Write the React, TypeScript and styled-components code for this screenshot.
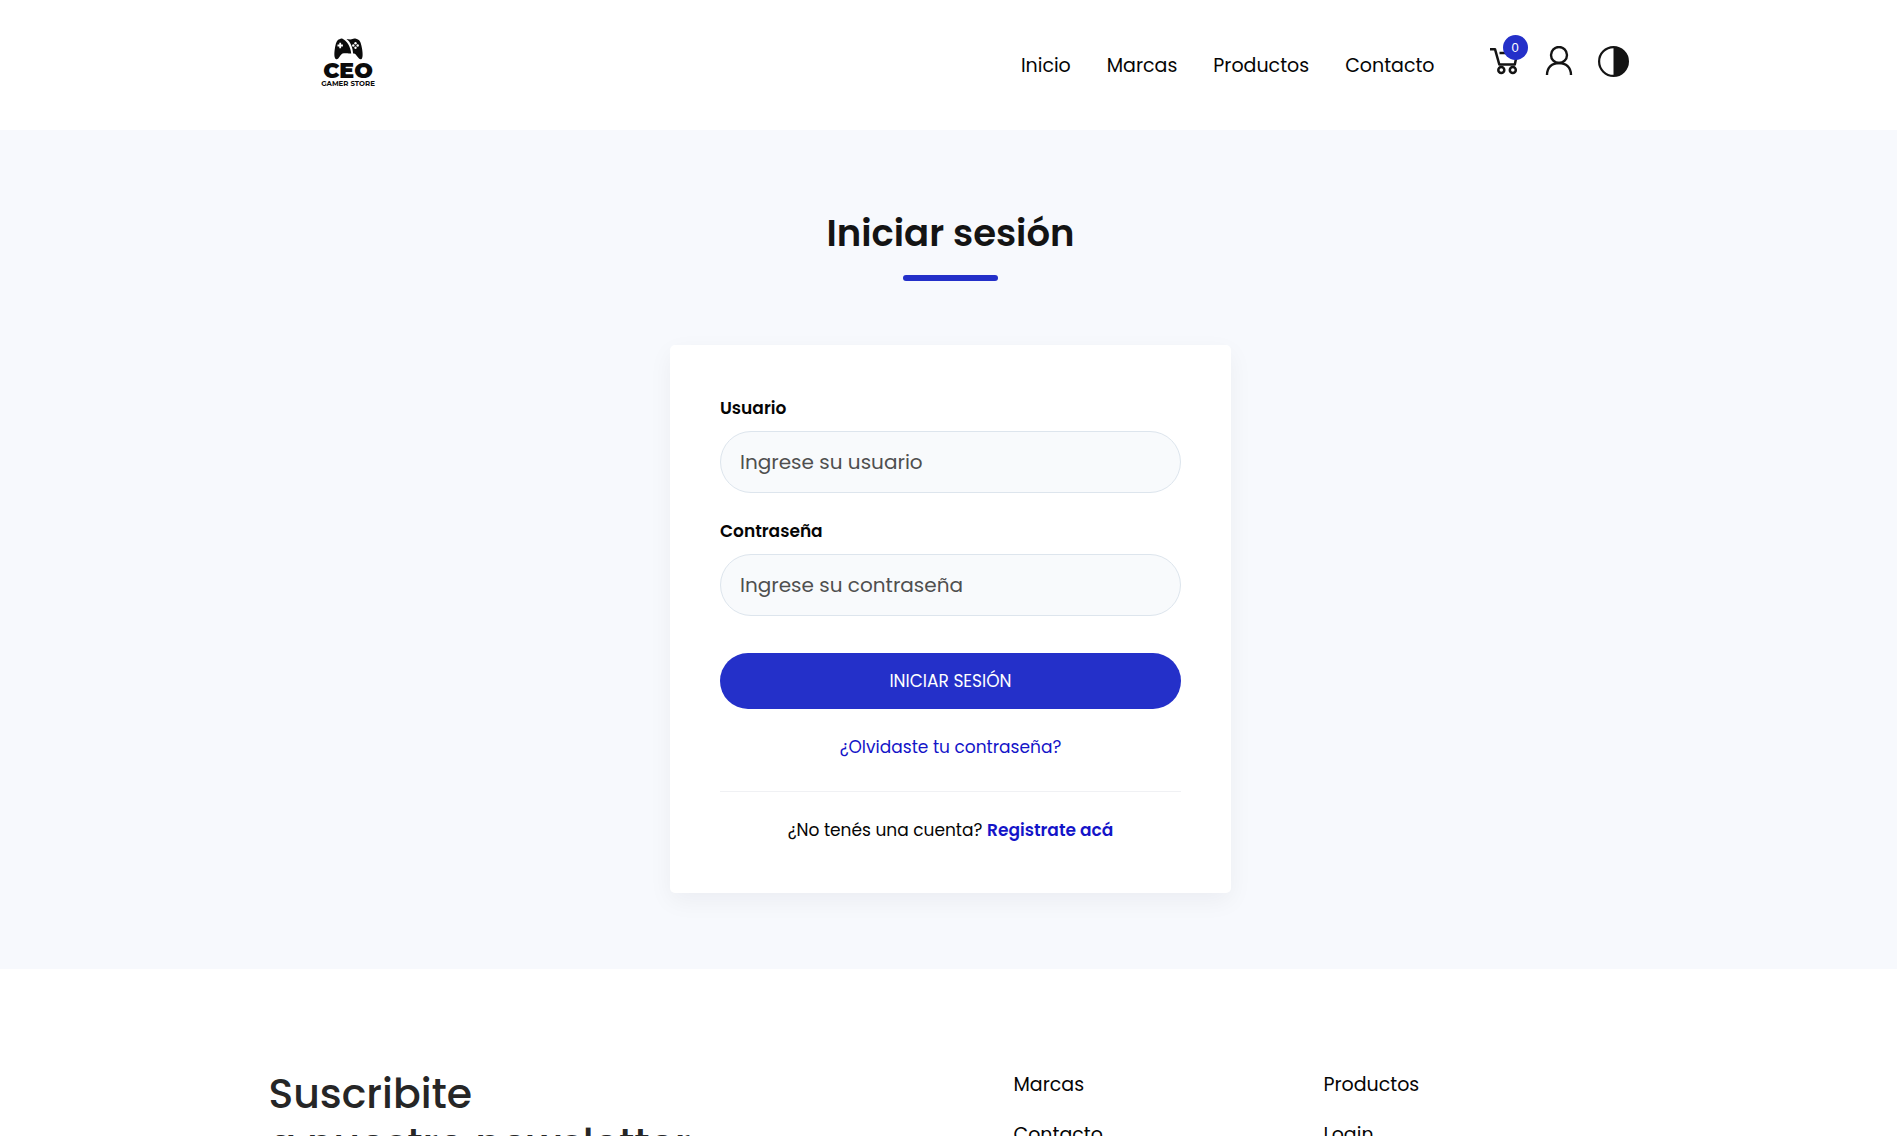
import React from "react";
import styled, { createGlobalStyle } from "styled-components";

const color = {
  ink: "#141414",
  text: "#050505",
  muted: "#4f4f4f",
  brand: "#2430c9",
  link: "#1414c8",
  surface: "#ffffff",
  page: "#f7f9fd",
  field: "#f8fafc",
  border: "#dde5ed",
};

const GlobalStyle = createGlobalStyle`
  *, *::before, *::after { box-sizing: border-box; }
  body {
    margin: 0;
    background: ${color.surface};
    color: ${color.text};
    font-family: Poppins, Inter, "Open Sans", sans-serif;
    font-size: 17px;
    overflow: hidden;
  }
  a { color: inherit; text-decoration: none; }
`;

const Page = styled.div`
  height: 100vh;
  overflow: hidden;
`;

const Header = styled.header`
  display: flex;
  justify-content: center;
  height: 130px;
  padding: 0 24px;
  background: ${color.surface};
`;

const HeaderInner = styled.div`
  display: flex;
  justify-content: space-between;
  align-items: center;
  width: 100%;
  max-width: 1310px;
  margin-left: 50px;
`;

const LogoLink = styled.a`
  display: block;
  padding-bottom: 4px;
  line-height: 0;
`;

const HeaderRight = styled.div`
  display: flex;
  align-items: center;
  gap: 55px;
`;

const Nav = styled.nav`
  display: flex;
  gap: 36px;
  padding-top: 2px;
`;

const NavLink = styled.a`
  font-size: 19px;
  line-height: 28px;
`;

const Actions = styled.div`
  display: flex;
  align-items: center;
  gap: 25px;
  padding-bottom: 8px;
`;

const IconButton = styled.button`
  position: relative;
  display: block;
  padding: 0;
  border: 0;
  background: none;
  color: ${color.ink};
  line-height: 0;
  cursor: pointer;
`;

const Badge = styled.span`
  position: absolute;
  top: -11px;
  right: -8px;
  width: 25px;
  height: 25px;
  border-radius: 50%;
  background: ${color.brand};
  color: #fff;
  font-size: 13px;
  line-height: 25px;
  text-align: center;
`;

const Main = styled.main`
  display: flex;
  flex-direction: column;
  align-items: center;
  padding: 78px 20px 76px 24px;
  background: ${color.page};
`;

const Title = styled.h1`
  margin: 0;
  color: ${color.ink};
  font-size: 37px;
  font-weight: 600;
  line-height: 50px;
`;

const TitleBar = styled.span`
  width: 95px;
  height: 6px;
  margin: 17px 0 64px;
  border-radius: 3px;
  background: ${color.brand};
`;

const Card = styled.form`
  display: flex;
  flex-direction: column;
  width: 100%;
  max-width: 561px;
  padding: 50px 50px 49px;
  border-radius: 5px;
  background: ${color.surface};
  box-shadow: 0 8px 24px rgba(20, 20, 40, 0.05);
`;

const Field = styled.div`
  display: flex;
  flex-direction: column;
  gap: 10px;
  margin-bottom: 25px;
`;

const Label = styled.label`
  font-weight: 600;
  line-height: 26px;
`;

const Input = styled.input`
  width: 100%;
  height: 62px;
  padding: 0 19px;
  border: 1px solid ${color.border};
  border-radius: 31px;
  background: ${color.field};
  color: ${color.text};
  font: inherit;
  font-size: 20px;
  &::placeholder { color: ${color.muted}; opacity: 1; }
`;

const Submit = styled.button`
  height: 56px;
  margin: 12px 0 24px;
  border: 0;
  border-radius: 28px;
  background: ${color.brand};
  color: #fff;
  font: inherit;
  text-transform: uppercase;
  cursor: pointer;
`;

const TextLink = styled.a<{ $strong?: boolean }>`
  color: ${color.link};
  font-weight: ${(p) => (p.$strong ? 600 : 400)};
`;

const CardText = styled.p`
  margin: 0;
  line-height: 28px;
  text-align: center;
`;

const Divider = styled.hr`
  width: 100%;
  margin: 30px 0 24px;
  border: 0;
  border-top: 1px solid #f0f1f4;
`;

const Footer = styled.footer`
  display: flex;
  justify-content: center;
  padding: 100px 20px 60px 24px;
`;

const FooterInner = styled.div`
  display: grid;
  grid-template-columns: 745px 310px 1fr;
  width: 100%;
  max-width: 1364px;
`;

const Newsletter = styled.h2`
  margin: 0;
  color: #262626;
  font-size: 41px;
  font-weight: 500;
  line-height: 50px;
`;

const FooterList = styled.ul`
  display: flex;
  flex-direction: column;
  gap: 22px;
  margin: 0;
  padding: 2px 0 0;
  list-style: none;
`;

function Logo() {
  return (
    <svg width="60" height="56" viewBox="0 0 60 56" role="img" aria-label="CEO Gamer Store">
      <path
        d="M20.500 4.200C17.800 4.600 16.700 8.400 15.800 14c-.6 4-.9 9.500 1.400 10.200 2.600.8 4.200-4.800 6.300-5.600.8-.3 4.200-.3 6.500-.1h2.200C31.500 11 28 6 23.500 3.700c-1-.6-2-.1-3 .5z"
        fill="#0b0b0b"
      />
      <path
        d="M27.500 3.900c4 2.900 6.200 8.300 6.600 14.600 1.500.1 2 .2 2.400.8 1.700 1.600 3.600 5.800 5.700 4.900 2-.9 1.500-6.600.9-10.300-.9-5.200-2-9.100-4.700-9.700-1-.2-1.500-.8-3-.8-1.700 0-2.200 1-4 1-1.500 0-2.700-.5-3.900-.5z"
        fill="#0b0b0b"
      />
      <path d="M18.500 10.500h5.400M21.200 7.800v5.400" stroke="#fff" strokeWidth="1.800" />
      <g fill="#fff">
        <circle cx="36.500" cy="8.300" r="1.200" />
        <circle cx="36.500" cy="12.700" r="1.200" />
        <circle cx="34.300" cy="10.500" r="1.200" />
        <circle cx="38.700" cy="10.500" r="1.200" />
      </g>
      <text
        x="29"
        y="43"
        textAnchor="middle"
        fontFamily="Montserrat, DejaVu Sans, sans-serif"
        fontWeight="900"
        fontSize="22"
        fill="#0b0b0b"
      >
        CEO
      </text>
      <text x="29" y="51" textAnchor="middle" fontFamily="Montserrat, Poppins, sans-serif" fontWeight="700" fontSize="7" fill="#0b0b0b">
        GAMER STORE
      </text>
    </svg>
  );
}

function CartIcon() {
  return (
    <svg width="30" height="30" viewBox="0 0 30 30" fill="none" stroke="currentColor" strokeWidth="2.500">
      <path d="M0 3.200h5L9.300 18.500h15.500L27 8M9.500 7H22" strokeLinejoin="round" />
      <circle cx="11.300" cy="24" r="3" />
      <circle cx="22.800" cy="24" r="3" />
    </svg>
  );
}

function UserIcon() {
  return (
    <svg width="28" height="30" viewBox="0 0 28 30" fill="none" stroke="currentColor" strokeWidth="2.400">
      <circle cx="14" cy="9" r="8" />
      <path d="M2 29C2 21.500 7 17 14 17s12 4.500 12 12" />
    </svg>
  );
}

function ContrastIcon() {
  return (
    <svg width="31" height="31" viewBox="0 0 31 31">
      <circle cx="15.500" cy="15.500" r="14.400" fill="none" stroke="currentColor" strokeWidth="2.200" />
      <path d="M15.500 1a14.500 14.500 0 0 1 0 29z" fill="currentColor" />
    </svg>
  );
}

const navItems = ["Inicio", "Marcas", "Productos", "Contacto"];
const footerColumns = [
  ["Marcas", "Contacto"],
  ["Productos", "Login"],
];

export default function App() {
  return (
    <Page>
      <GlobalStyle />
      <Header>
        <HeaderInner>
          <LogoLink href="#inicio">
            <Logo />
          </LogoLink>
          <HeaderRight>
            <Nav>
              {navItems.map((item) => (
                <NavLink key={item} href={`#${item.toLowerCase()}`}>
                  {item}
                </NavLink>
              ))}
            </Nav>
            <Actions>
              <IconButton type="button" aria-label="Carrito">
                <CartIcon />
                <Badge>0</Badge>
              </IconButton>
              <IconButton type="button" aria-label="Mi cuenta">
                <UserIcon />
              </IconButton>
              <IconButton type="button" aria-label="Cambiar tema">
                <ContrastIcon />
              </IconButton>
            </Actions>
          </HeaderRight>
        </HeaderInner>
      </Header>

      <Main>
        <Title>Iniciar sesión</Title>
        <TitleBar />
        <Card onSubmit={(e) => e.preventDefault()}>
          <Field>
            <Label htmlFor="usuario">Usuario</Label>
            <Input id="usuario" type="text" placeholder="Ingrese su usuario" />
          </Field>
          <Field>
            <Label htmlFor="contrasena">Contraseña</Label>
            <Input id="contrasena" type="password" placeholder="Ingrese su contraseña" />
          </Field>
          <Submit type="submit">Iniciar sesión</Submit>
          <CardText>
            <TextLink href="#recuperar">¿Olvidaste tu contraseña?</TextLink>
          </CardText>
          <Divider />
          <CardText>
            ¿No tenés una cuenta?{" "}
            <TextLink $strong href="#registro">
              Registrate acá
            </TextLink>
          </CardText>
        </Card>
      </Main>

      <Footer>
        <FooterInner>
          <Newsletter>
            Suscribite
            <br />a nuestro newsletter
          </Newsletter>
          {footerColumns.map((links) => (
            <FooterList key={links[0]}>
              {links.map((link) => (
                <li key={link}>
                  <NavLink href={`#${link.toLowerCase()}`}>{link}</NavLink>
                </li>
              ))}
            </FooterList>
          ))}
        </FooterInner>
      </Footer>
    </Page>
  );
}
